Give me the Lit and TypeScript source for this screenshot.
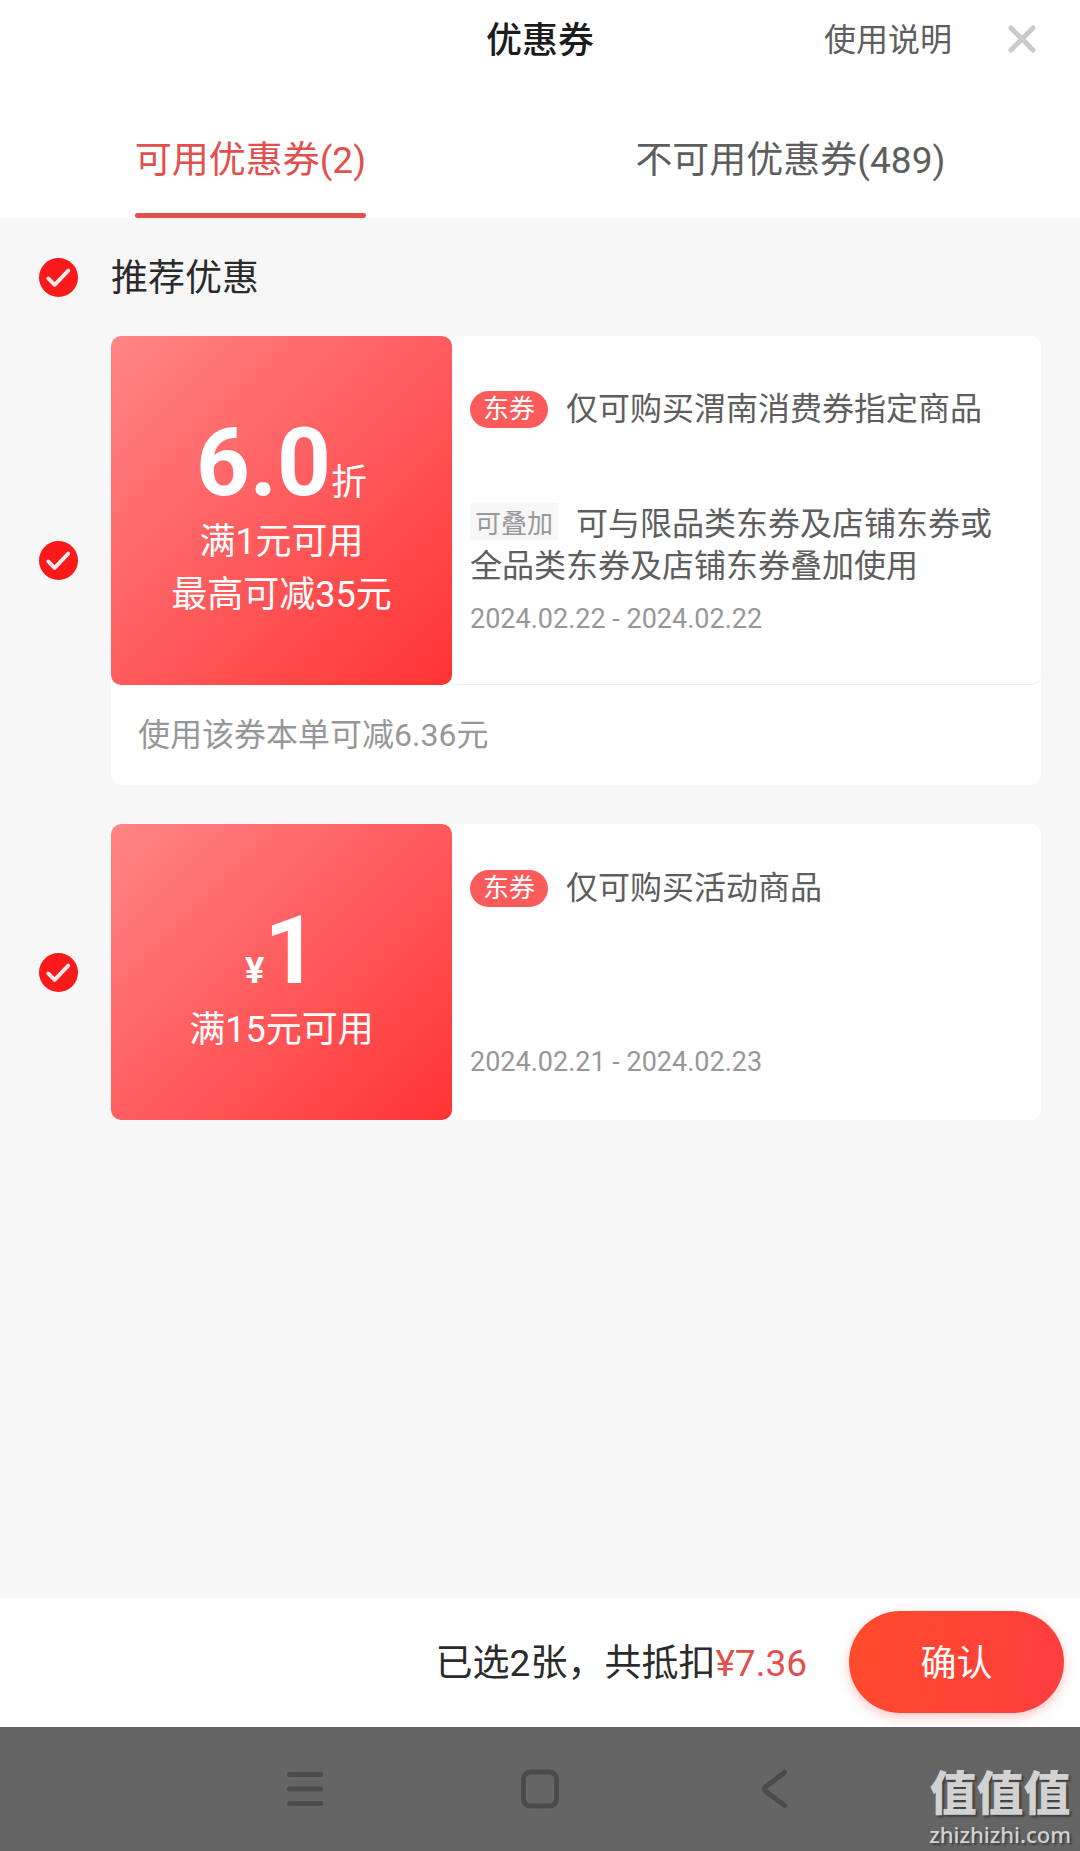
import { LitElement, html, css, svg, nothing } from "lit";
import { customElement, property, state } from "lit/decorators.js";
import { classMap } from "lit/directives/class-map.js";

interface Coupon {
  id: string;
  prefix?: string;
  amount: string;
  suffix?: string;
  rules: string[];
  title: string;
  stack?: string;
  period: string;
  saving?: string;
}

const COUPONS: Coupon[] = [
  {
    id: "discount",
    amount: "6.0",
    suffix: "折",
    rules: ["满1元可用", "最高可减35元"],
    title: "仅可购买渭南消费券指定商品",
    stack: "可与限品类东券及店铺东券或全品类东券及店铺东券叠加使用",
    period: "2024.02.22 - 2024.02.22",
    saving: "使用该券本单可减6.36元",
  },
  {
    id: "cash",
    prefix: "¥",
    amount: "1",
    rules: ["满15元可用"],
    title: "仅可购买活动商品",
    period: "2024.02.21 - 2024.02.23",
  },
];

const checkStyles = css`
  .check {
    display: grid;
    width: 39px;
    height: 39px;
    flex: none;
  }
  .check input,
  .check svg {
    grid-area: 1 / 1;
    width: 39px;
    height: 39px;
    margin: 0;
  }
  .check input {
    appearance: none;
    border-radius: 50%;
    border: 2px solid #cccccc;
    box-sizing: border-box;
    background: #ffffff;
  }
  .check input:checked {
    border: none;
    background: #fa1a1a;
  }
  .check svg {
    pointer-events: none;
  }
`;

const tick = svg`<path d="M9.500 21 L16 27.500 L30 13" fill="none" stroke="#ffeaea" stroke-width="4" stroke-linecap="round" stroke-linejoin="round"/>`;

@customElement("coupon-card")
export class CouponCard extends LitElement {
  @property({ attribute: false }) coupon!: Coupon;
  @state() private checked = true;

  static styles = [
    checkStyles,
    css`
      :host {
        display: flex;
        align-items: center;
        gap: 33px;
      }
      .card {
        flex: 1;
        min-width: 0;
        border-radius: 10px;
        background: #ffffff;
      }
      .main {
        display: flex;
        min-height: 296px;
      }
      .face {
        display: flex;
        flex-direction: column;
        align-items: center;
        justify-content: center;
        flex: none;
        width: 341px;
        border-radius: 10px;
        color: #ffffff;
        background: linear-gradient(135deg, #ff8585 0%, #ff5c5e 50%, #ff3333 100%);
      }
      .price {
        display: flex;
        align-items: baseline;
        height: 116px;
        line-height: 126px;
        font-size: 36px;
      }
      .amount {
        font-family: Roboto, sans-serif;
        font-size: 94px;
        font-weight: 700;
      }
      .prefix {
        font-weight: 700;
      }
      .rule {
        font-size: 36px;
        line-height: 53px;
      }
      .info {
        display: flex;
        flex-direction: column;
        flex: 1;
        min-width: 0;
        padding: 43px 36px 39px 18px;
        font-size: 32px;
        line-height: 42px;
        color: #5e5e5e;
      }
      .roomy .info {
        padding-top: 52px;
        padding-bottom: 46px;
        border-bottom: 1px solid #eeeeee;
        border-bottom-right-radius: 10px;
      }
      .title {
        display: flex;
        align-items: center;
        gap: 18px;
      }
      .pill {
        padding: 0 13px;
        border-radius: 19px;
        font-size: 26px;
        line-height: 37px;
        color: #ffffff;
        background: #fb5b5b;
      }
      .stack {
        margin: 73px 0 13px;
      }
      .tag {
        margin-right: 18px;
        padding: 0 5px;
        font-family: "Noto Sans CJK SC", sans-serif;
        font-size: 26px;
        line-height: 26px;
        vertical-align: 2px;
        color: #999999;
        background: #f7f7f7;
      }
      .period {
        margin-top: auto;
        font-size: 27px;
        line-height: 38px;
        color: #979797;
      }
      .saving {
        padding: 0 27px;
        font-size: 32px;
        line-height: 100px;
        color: #979797;
      }
    `,
  ];

  render() {
    const c = this.coupon;
    return html`
      <span class="check">
        <input
          type="checkbox"
          aria-labelledby="title"
          .checked=${this.checked}
          @change=${(e: Event) => (this.checked = (e.target as HTMLInputElement).checked)}
        />
        ${this.checked ? html`<svg viewBox="0 0 40 40" aria-hidden="true">${tick}</svg>` : nothing}
      </span>
      <article class=${classMap({ card: true, roomy: !!c.stack })}>
        <div class="main">
          <div class="face">
            <div class="price">
              ${c.prefix ? html`<span class="prefix">${c.prefix}</span>` : nothing}
              <span class="amount">${c.amount}</span>
              ${c.suffix ? html`<span>${c.suffix}</span>` : nothing}
            </div>
            ${c.rules.map((rule) => html`<div class="rule">${rule}</div>`)}
          </div>
          <div class="info">
            <div class="title"><span class="pill">东券</span><span id="title">${c.title}</span></div>
            ${c.stack
              ? html`<div class="stack"><span class="tag">可叠加</span><span>${c.stack}</span></div>`
              : nothing}
            <div class="period">${c.period}</div>
          </div>
        </div>
        ${c.saving ? html`<div class="saving">${c.saving}</div>` : nothing}
      </article>
    `;
  }
}

@customElement("app-root")
export class AppRoot extends LitElement {
  @state() private tab = 0;
  @state() private recommended = true;

  static styles = [
    checkStyles,
    css`
      :host {
        display: flex;
        flex-direction: column;
        min-height: 100vh;
        position: relative;
        background: #f7f7f7;
        font-family: Roboto, "Noto Sans CJK SC", sans-serif;
        color: #2b2b2b;
      }
      button {
        margin: 0;
        padding: 0;
        border: none;
        background: none;
        font: inherit;
        color: inherit;
      }
      .top {
        background: #ffffff;
      }
      .header {
        display: grid;
        grid-template-columns: 1fr auto 1fr;
        align-items: center;
        height: 78px;
        padding: 0 40px;
      }
      .heading {
        grid-column: 2;
        margin: 0;
        padding-bottom: 4px;
        font-size: 36px;
        font-weight: 500;
        color: #1c1c1c;
      }
      .actions {
        display: flex;
        align-items: center;
        justify-content: flex-end;
        gap: 52px;
        font-size: 32px;
        color: #5e5e5e;
      }
      .help {
        padding-bottom: 4px;
      }
      .close {
        display: flex;
      }
      .tabs {
        display: flex;
        justify-content: space-around;
        height: 140px;
      }
      .tab {
        display: flex;
        flex-direction: column;
        justify-content: space-between;
        font-size: 37px;
        line-height: 54px;
        padding-top: 56px;
        color: #5e5e5e;
      }
      .tab::after {
        content: "";
        width: 100%;
        height: 5px;
        border-radius: 3px;
      }
      .tab.active {
        color: #e2504e;
      }
      .tab.active::after {
        background: #e2504e;
      }
      .list {
        flex: 1;
        display: flex;
        flex-direction: column;
        gap: 39px;
        padding: 0 39px;
      }
      .group {
        display: flex;
        align-items: center;
        gap: 33px;
        height: 118px;
        margin-bottom: -39px;
        font-size: 37px;
      }
      .group-name {
        padding-bottom: 4px;
      }
      .footer {
        display: flex;
        align-items: center;
        justify-content: flex-end;
        gap: 42px;
        box-sizing: border-box;
        height: 129px;
        padding: 0 16px 2px;
        font-size: 37px;
        background: #ffffff;
      }
      .summary {
        padding-bottom: 4px;
      }
      .total {
        color: #e2504e;
      }
      .footer .confirm {
        width: 215px;
        height: 102px;
        padding-bottom: 4px;
        border-radius: 51px;
        font-size: 36px;
        color: #ffffff;
        background: linear-gradient(100deg, #ff4b2b, #ff3d40);
        box-shadow: 0 4px 12px rgba(255, 65, 60, 0.3);
      }
      .system {
        display: flex;
        align-items: center;
        justify-content: center;
        gap: 191px;
        height: 124px;
        background: #656565;
      }
      .system button {
        display: flex;
      }
      .system svg {
        fill: none;
        stroke: #4b4b4b;
        stroke-width: 5;
        stroke-linecap: round;
        stroke-linejoin: round;
      }
      .watermark {
        position: absolute;
        right: 9px;
        bottom: 2px;
        text-align: center;
        color: #d2d2d2;
        text-shadow: 2px 2px 2px #3f3f3f;
      }
      .mark {
        font-size: 47px;
        line-height: 50px;
        font-weight: 900;
      }
      .site {
        font-family: "Noto Sans", sans-serif;
        font-size: 22px;
        line-height: 30px;
        font-weight: 500;
      }
    `,
  ];

  render() {
    const tabs = ["可用优惠券(2)", "不可用优惠券(489)"];
    return html`
      <div class="top">
        <header class="header">
          <h1 class="heading">优惠券</h1>
          <div class="actions">
            <button class="help">使用说明</button>
            <button class="close" aria-label="关闭">
              <svg width="36" height="36" viewBox="0 0 36 36" aria-hidden="true">
                <path d="M7 7 L29 29 M29 7 L7 29" stroke="#cacaca" stroke-width="5" stroke-linecap="round" />
              </svg>
            </button>
          </div>
        </header>
        <nav class="tabs">
          ${tabs.map(
            (name, i) => html`<button
              class=${classMap({ tab: true, active: this.tab === i })}
              @click=${() => (this.tab = i)}
            >${name}</button>`,
          )}
        </nav>
      </div>
      <main class="list">
        <label class="group">
          <span class="check">
            <input
              type="checkbox"
              .checked=${this.recommended}
              @change=${(e: Event) => (this.recommended = (e.target as HTMLInputElement).checked)}
            />
            ${this.recommended
              ? html`<svg viewBox="0 0 40 40" aria-hidden="true">${tick}</svg>`
              : nothing}
          </span>
          <span class="group-name">推荐优惠</span>
        </label>
        ${COUPONS.map((c) => html`<coupon-card .coupon=${c}></coupon-card>`)}
      </main>
      <footer class="footer">
        <div class="summary">已选2张，共抵扣<span class="total">¥7.36</span></div>
        <button class="confirm">确认</button>
      </footer>
      <nav class="system">
        <button aria-label="菜单">
          <svg width="44" height="44" viewBox="0 0 44 44">
            <path d="M6.500 7.500 H37.500 M6.500 22 H37.500 M6.500 36.500 H37.500" />
          </svg>
        </button>
        <button aria-label="主页">
          <svg width="44" height="44" viewBox="0 0 44 44">
            <rect x="5.500" y="5" width="33" height="34" rx="7" />
          </svg>
        </button>
        <button aria-label="返回">
          <svg width="44" height="44" viewBox="0 0 44 44">
            <path d="M31.500 5.500 L13.500 19 Q9.500 22 13.500 25 L31.500 38.500" />
          </svg>
        </button>
      </nav>
      <div class="watermark">
        <div class="mark">值值值</div>
        <div class="site">zhizhizhi.com</div>
      </div>
    `;
  }
}
